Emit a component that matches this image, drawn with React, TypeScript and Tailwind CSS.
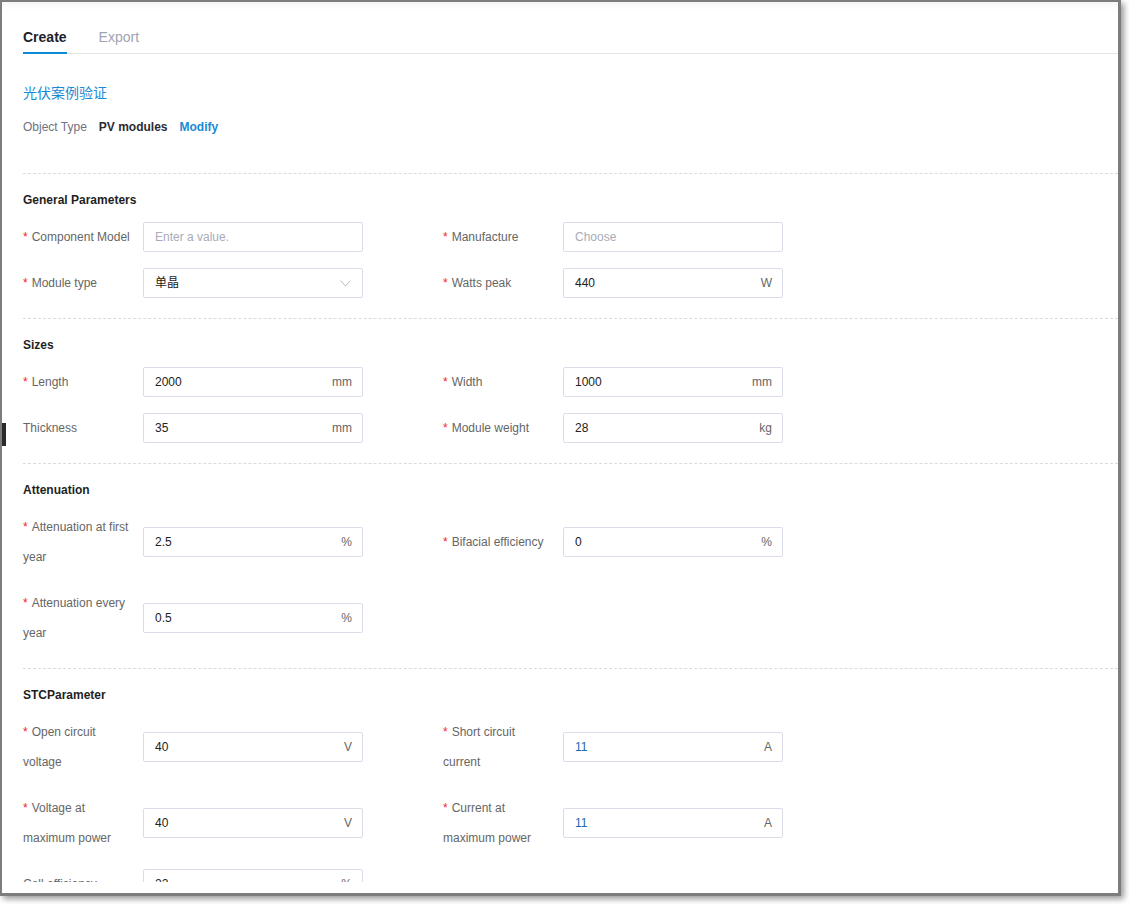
import React from 'react';

interface FieldProps {
  label: string[];
  required?: boolean;
  value?: string;
  placeholder?: string;
  unit?: string;
  select?: boolean;
  valueColor?: string;
}

const Field: React.FC<FieldProps> = ({ label, required, value, placeholder, unit, select, valueColor }) => (
  <div className="flex items-center mb-4">
    <div className="w-[120px] text-[12px] leading-[30px] text-[#666]">
      {label.map((line, i) => (
        <div key={i}>
          {i === 0 && required && <span className="text-[#f5222d] mr-[4px]">*</span>}
          {line}
        </div>
      ))}
    </div>
    <div className="w-[220px] h-[30px] border border-[#dcdbe8] rounded-[2px] flex items-center justify-between pl-[11px] pr-[10px] text-[12px] bg-white">
      {value ? (
        <span className={valueColor ?? 'text-[#222]'}>{value}</span>
      ) : (
        <span className="text-[#a9abb9]">{placeholder}</span>
      )}
      {unit && <span className="text-[#666]">{unit}</span>}
      {select && (
        <svg width="11" height="7" viewBox="0 0 11 7" className="mr-[1px]">
          <polyline points="0.5,0.5 5.5,6 10.5,0.5" fill="none" stroke="#b8b8c4" strokeWidth="1" />
        </svg>
      )}
    </div>
  </div>
);

const Section: React.FC<{ title: string; children: React.ReactNode }> = ({ title, children }) => (
  <div className="border-t border-dashed border-[#d9dbe3] pt-[17px] pb-1">
    <div className="text-[12px] leading-[18px] font-bold text-[#1f1f1f] mb-[13px]">{title}</div>
    <div className="grid grid-cols-[420px_420px]">{children}</div>
  </div>
);

const blue = 'text-[#2468b0]';

export default function App() {
  return (
    <div className="w-[1129px] h-[904px] bg-white font-['Liberation_Sans','Noto_Sans_CJK_SC',sans-serif]">
      <div className="relative w-[1121px] h-[896px] border-t-2 border-l-2 border-r-[3px] border-b-[3px] border-[#7d7d7d] bg-white shadow-[3px_3px_6px_rgba(0,0,0,0.4)] pb-[11px]">
        <div className="absolute left-0 top-[421px] w-[4px] h-[23px] bg-[#2a2a2a]" />
        <div className="h-[880px] overflow-hidden pl-[21px] shadow-[inset_0_8px_8px_-6px_rgba(0,0,0,0.06)]">
          {/* Tabs */}
          <div className="flex border-b border-[#e4e4e8] gap-8">
            <div className="pt-[25px] pb-[5px] leading-5 text-[14px] font-bold text-[#1d1e2c] border-b-2 border-[#0b8ad6] -mb-px">
              Create
            </div>
            <div className="pt-[25px] pb-[5px] leading-5 text-[14px] text-[#a1a4b3] border-b-2 border-transparent -mb-px">
              Export
            </div>
          </div>

          <div className="mt-[29px] text-[14px] leading-5 text-[#1a8ad4]">光伏案例验证</div>
          <div className="mt-[14px] flex items-center text-[12px] leading-5">
            <span className="text-[#6f7280]">Object Type</span>
            <span className="ml-3 font-bold text-[#2b2b33]">PV modules</span>
            <span className="ml-3 font-bold text-[#1a8ad4]">Modify</span>
          </div>

          <div className="mt-[36px]">
            <Section title="General Parameters">
              <Field label={['Component Model']} required placeholder="Enter a value." />
              <Field label={['Manufacture']} required placeholder="Choose" />
              <Field label={['Module type']} required value="单晶" select />
              <Field label={['Watts peak']} required value="440" unit="W" />
            </Section>

            <Section title="Sizes">
              <Field label={['Length']} required value="2000" unit="mm" />
              <Field label={['Width']} required value="1000" unit="mm" />
              <Field label={['Thickness']} value="35" unit="mm" />
              <Field label={['Module weight']} required value="28" unit="kg" />
            </Section>

            <Section title="Attenuation">
              <Field label={['Attenuation at first', 'year']} required value="2.5" unit="%" />
              <Field label={['Bifacial efficiency']} required value="0" unit="%" />
              <Field label={['Attenuation every', 'year']} required value="0.5" unit="%" />
              <div />
            </Section>

            <Section title="STCParameter">
              <Field label={['Open circuit', 'voltage']} required value="40" unit="V" />
              <Field label={['Short circuit', 'current']} required value="11" unit="A" valueColor={blue} />
              <Field label={['Voltage at', 'maximum power']} required value="40" unit="V" />
              <Field label={['Current at', 'maximum power']} required value="11" unit="A" valueColor={blue} />
              <Field label={['Cell efficiency']} value="22" unit="%" />
              <div />
            </Section>
          </div>
        </div>
      </div>
    </div>
  );
}
